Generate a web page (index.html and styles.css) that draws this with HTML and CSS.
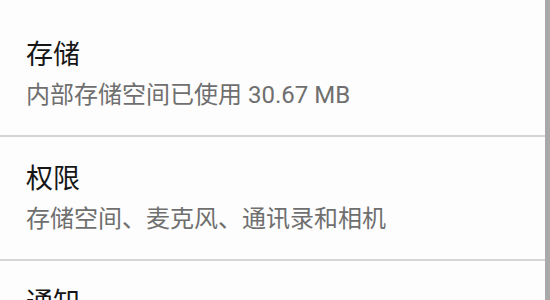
FILE: index.html
```html
<!DOCTYPE html>
<html lang="zh-CN">
<head>
<meta charset="utf-8">
<link rel="stylesheet" href="styles.css">
</head>
<body>
<div class="page">
  <div class="list">
    <div class="item">
      <div class="title">存储</div>
      <div class="sub">内部存储空间已使用 30.67 MB</div>
    </div>
    <div class="item">
      <div class="title">权限</div>
      <div class="sub">存储空间、麦克风、通讯录和相机</div>
    </div>
    <div class="item">
      <div class="title">通知</div>
      <div class="sub">已允许</div>
    </div>
  </div>
  <div class="edge"></div>
</div>
</body>
</html>
```
FILE: styles.css
```css
html, body {
  margin: 0;
  padding: 0;
  background: #fdfdfd;
  overflow: hidden;
}
.page {
  display: flex;
  width: 550px;
  height: 300px;
  overflow: hidden;
}
.list {
  flex: 1;
  padding-top: 13px;
  font-family: Roboto, "Noto Sans CJK SC", sans-serif;
}
.item {
  padding: 25px 0 23px 26px;
  border-bottom: 2px solid #d6d6d6;
}
.title {
  font-size: 27px;
  line-height: 34px;
  color: #161616;
}
.sub {
  margin-top: 6px;
  font-size: 24px;
  line-height: 34px;
  color: #6f6f6f;
}
.edge {
  width: 5px;
  background: #a9a9a9;
}
```
